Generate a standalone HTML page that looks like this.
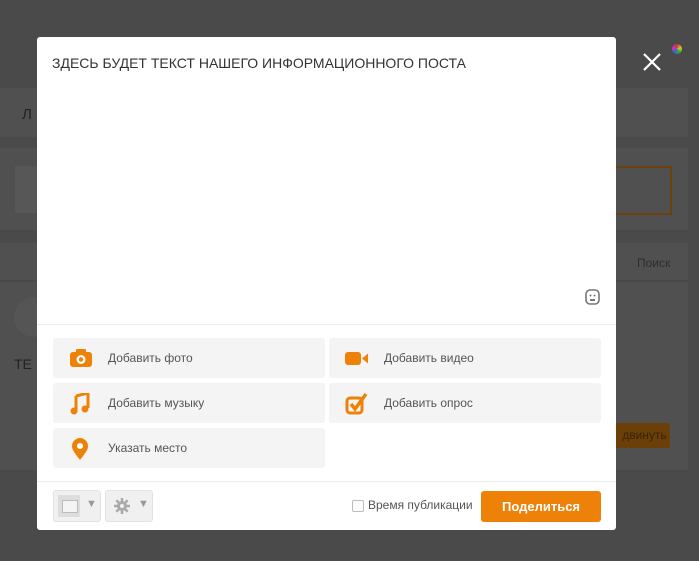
<!DOCTYPE html>
<html><head><meta charset="utf-8"><style>
body{margin:0;width:699px;height:561px;background:#4a4a4a;position:relative;overflow:hidden;font-family:"Liberation Sans",sans-serif}
.p{position:absolute;background:#505050}
.m{position:absolute;left:37px;top:37px;width:579px;height:493px;background:#fff;border-radius:3px}
.t{position:absolute;left:15px;top:18px;font-size:14px;color:#333;letter-spacing:0}
.b{position:absolute;width:272px;height:40px;background:#f4f4f4;border-radius:3px;font-size:12px;color:#555}
.b span{position:absolute;left:55px;top:13px}
.b svg{position:absolute;left:16px;top:10px}
.hr{position:absolute;left:0;width:579px;height:1px;background:#ececec}
.fb{position:absolute;top:453px;width:46px;height:30px;background:#f0f0f0;border:1px solid #e2e2e2;border-radius:3px}
</style></head><body>
<div class="p" style="left:0;top:88px;width:688px;height:49px"></div>
<div class="p" style="left:0;top:148px;width:688px;height:82px"></div>
<div class="p" style="left:15px;top:166px;width:22px;height:47px;background:#575757"></div>
<div style="position:absolute;left:600px;top:166px;width:68px;height:45px;border:2px solid #6a4210"></div>
<div class="p" style="left:0;top:243px;width:688px;height:37px"></div>
<div style="position:absolute;left:637px;top:256px;font-size:12px;color:#2e2e2e">Поиск</div>
<div class="p" style="left:0;top:282px;width:688px;height:188px"></div>
<div style="position:absolute;left:14px;top:356px;font-size:14px;color:#222">TE</div>
<div style="position:absolute;left:22px;top:106px;font-size:15px;color:#222">Л</div>
<div style="position:absolute;left:14px;top:297px;width:40px;height:40px;border-radius:50%;background:#555"></div>
<div style="position:absolute;left:600px;top:423px;width:70px;height:25px;background:#6b3f08;border-radius:2px;color:#3a2404;font-size:12px;line-height:25px;text-align:right">двинуть&nbsp;</div>
<svg style="position:absolute;left:643px;top:53px" width="18" height="18"><path d="M1 1L17 17M17 1L1 17" stroke="#fff" stroke-width="2.2"/></svg>
<div style="position:absolute;left:672px;top:44px;width:10px;height:10px;border-radius:50%;background:conic-gradient(#c33,#cc3,#3a3,#36c,#c3c,#c33)"></div>
<div class="m">
<div class="t">ЗДЕСЬ БУДЕТ ТЕКСТ НАШЕГО ИНФОРМАЦИОННОГО ПОСТА</div>
<svg style="position:absolute;left:548px;top:252px" width="15" height="16"><rect x="1" y="1" width="13" height="14" rx="4" fill="none" stroke="#777" stroke-width="1.6"/><circle cx="5.5" cy="6.5" r="1" fill="#777"/><circle cx="9.5" cy="6.5" r="1" fill="#777"/><path d="M5 10h5v2H5z" fill="#777"/></svg>
<div class="hr" style="top:287px"></div>
<div class="b" style="left:16px;top:301px"><svg width="24" height="20"><rect x="1" y="4" width="22" height="15" rx="3" fill="#ee8208"/><rect x="7" y="1" width="10" height="5" rx="1" fill="#ee8208"/><circle cx="12" cy="11.5" r="4.5" fill="#fff"/><circle cx="12" cy="11.5" r="2.2" fill="#ee8208"/></svg><span>Добавить фото</span></div>
<div class="b" style="left:292px;top:301px"><svg width="24" height="20"><rect x="0" y="4" width="16" height="13" rx="3" fill="#ee8208"/><path d="M17 10.5l6-5v10z" fill="#ee8208"/></svg><span>Добавить видео</span></div>
<div class="b" style="left:16px;top:346px"><svg width="24" height="22"><path d="M7 3l12-3v15" stroke="#ee8208" stroke-width="3" fill="none"/><circle cx="5" cy="18" r="3.5" fill="#ee8208"/><circle cx="16" cy="16" r="3.5" fill="#ee8208"/><path d="M7 3v15" stroke="#ee8208" stroke-width="3"/></svg><span>Добавить музыку</span></div>
<div class="b" style="left:292px;top:346px"><svg width="24" height="22"><rect x="2" y="5" width="15" height="15" rx="3" fill="none" stroke="#ee8208" stroke-width="3"/><path d="M6 11l4 5L21 1" stroke="#ee8208" stroke-width="3.5" fill="none"/></svg><span>Добавить опрос</span></div>
<div class="b" style="left:16px;top:391px"><svg width="24" height="22"><path d="M11 22C4 13 3 11 3 8a8 8 0 0 1 16 0c0 3-1 5-8 14z" fill="#ee8208"/><circle cx="11" cy="8" r="3" fill="#fff"/></svg><span>Указать место</span></div>
<div class="hr" style="top:444px"></div>
<div class="fb" style="left:16px"><div style="position:absolute;left:4px;top:4px;width:22px;height:22px;background:#ddd"></div><div style="position:absolute;left:8px;top:9px;width:14px;height:11px;border:1px solid #bbb;background:#f4f4f4"></div><div style="position:absolute;left:32px;top:7px;color:#999;font-size:11px">▼</div></div>
<div class="fb" style="left:68px"><svg style="position:absolute;left:7px;top:6px" width="18" height="18"><circle cx="9" cy="9" r="5" fill="#aaa"/><path d="M9 1v16M1 9h16M3.3 3.3l11.4 11.4M14.7 3.3L3.3 14.7" stroke="#aaa" stroke-width="2.5"/><circle cx="9" cy="9" r="2" fill="#f0f0f0"/></svg><div style="position:absolute;left:32px;top:7px;color:#999;font-size:11px">▼</div></div>
<div style="position:absolute;left:315px;top:463px;width:10px;height:10px;border:1px solid #bbb;border-radius:2px"></div>
<div style="position:absolute;left:331px;top:461px;font-size:12px;color:#555">Время публикации</div>
<div style="position:absolute;left:444px;top:454px;width:120px;height:31px;background:#ee8208;border-radius:3px;color:#fff;font-size:13px;font-weight:bold;text-align:center;line-height:31px">Поделиться</div>
</div>
</body></html>
